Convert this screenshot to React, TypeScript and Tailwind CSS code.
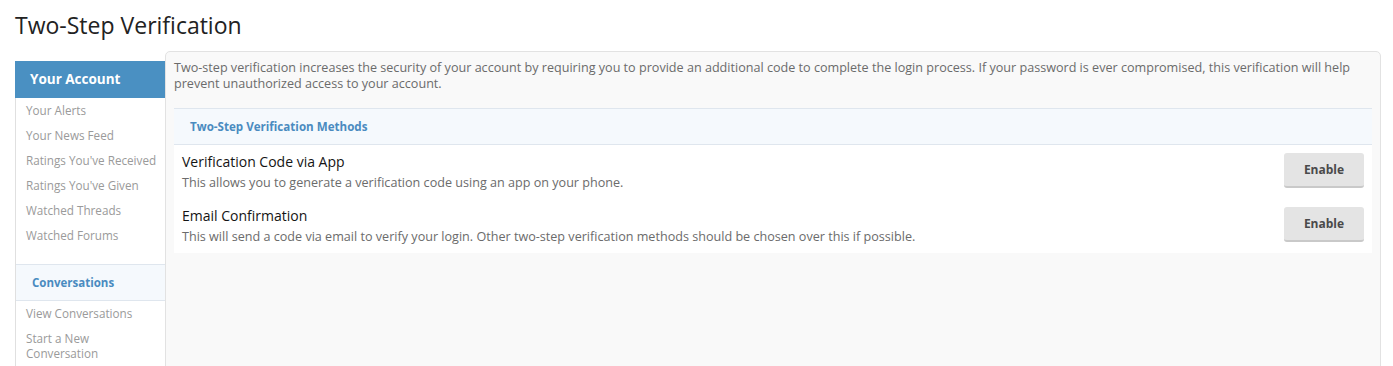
const accountLinks = [
  "Your Alerts",
  "Your News Feed",
  "Ratings You've Received",
  "Ratings You've Given",
  "Watched Threads",
  "Watched Forums",
];

const conversationLinks = ["View Conversations", "Start a New Conversation"];

const methods = [
  {
    title: "Verification Code via App",
    desc: "This allows you to generate a verification code using an app on your phone.",
  },
  {
    title: "Email Confirmation",
    desc: "This will send a code via email to verify your login. Other two-step verification methods should be chosen over this if possible.",
  },
];

export default function App() {
  return (
    <div
      className="min-h-[366px] bg-white pl-[15px] pr-[12px] pt-[7px] text-[#141414]"
      style={{ fontFamily: '"Open Sans", "Noto Sans", sans-serif' }}
    >
      <h1 className="text-[23px] leading-[36px] font-normal text-[#222]">
        Two-Step Verification
      </h1>

      <div className="mt-[8px] flex">
        {/* sidebar */}
        <div className="mt-[10px] w-[150px] shrink-0 border-l border-[#e0e0e0] bg-white min-h-[400px]">
          <div className="-ml-px h-[37px] bg-[#4a90c2] pl-[15px] text-[13.5px] leading-[37px] font-bold text-white">
            Your Account
          </div>
          <ul className="pb-[16px] border-b border-[#dfe6ee]">
            {accountLinks.map((l) => (
              <li
                key={l}
                className="py-[5px] pl-[10px] pr-[2px] text-[11.7px] leading-[15px] whitespace-nowrap text-[#9a9a9a]"
              >
                {l}
              </li>
            ))}
          </ul>
          <div className="h-[36px] border-b border-[#dfe6ee] bg-[#f5f9fd] pl-[16px] text-[11.5px] leading-[35px] font-bold text-[#4a8bc0]">
            Conversations
          </div>
          <ul>
            {conversationLinks.map((l) => (
              <li
                key={l}
                className="py-[5px] pl-[10px] pr-[14px] text-[11.7px] leading-[15px] text-[#9a9a9a]"
              >
                {l}
              </li>
            ))}
          </ul>
        </div>

        {/* main panel */}
        <div className="flex-1 min-h-[400px] rounded-t-[5px] border border-[#e2e2e2] bg-[#f9f9f9] px-[8px] pt-[8px]">
          <p className="text-[12.6px] leading-[16px] text-[#6b6b6b]">
            Two-step verification increases the security of your account by requiring you to provide an additional code to complete the login process. If your password is ever compromised, this verification will help prevent unauthorized access to your account.
          </p>

          <div className="mt-[16px]">
            <div className="h-[37px] border-y border-[#dfe6ee] bg-[#f5f9fd] pl-[16px] text-[11.6px] leading-[35px] font-bold text-[#4a8bc0]">
              Two-Step Verification Methods
            </div>
            <div className="bg-white">
              {methods.map((m) => (
                <div key={m.title} className="flex items-start justify-between p-[8px]">
                  <div>
                    <div className="text-[14px] leading-[18px] text-[#141414]">
                      {m.title}
                    </div>
                    <div className="mt-[4px] text-[12.6px] leading-[16px] text-[#6b6b6b]">
                      {m.desc}
                    </div>
                  </div>
                  <button className="h-[35px] w-[80px] rounded-[3px] border-b-2 border-[#c9c9c9] bg-[#e4e4e4] text-[12px] font-bold text-[#4a4a4a]">
                    Enable
                  </button>
                </div>
              ))}
            </div>
          </div>
        </div>
      </div>
    </div>
  );
}
